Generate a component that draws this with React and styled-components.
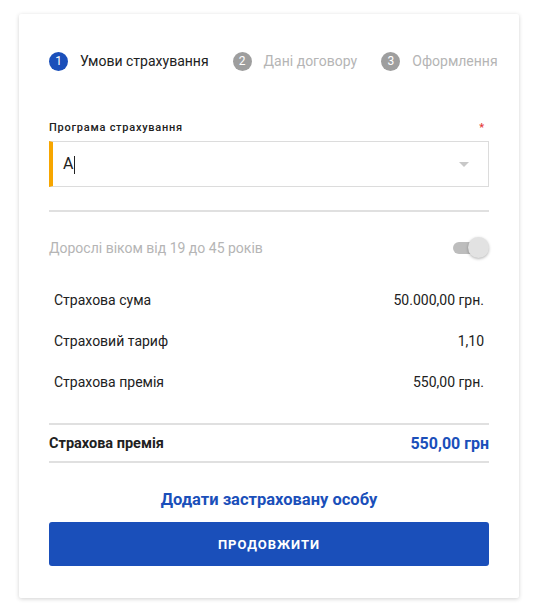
import styled, { createGlobalStyle } from "styled-components"

const Global = createGlobalStyle`
    body {
        margin: 0;
        background: #ffffff;
        font-family: Roboto, "Noto Sans", sans-serif;
    }
`

const Page = styled.div`
    padding: 14px 30px 13px 19px;
`

const Card = styled.section`
    width: 500px;
    box-sizing: border-box;
    padding: 37px 30px 32px;
    background: #fff;
    box-shadow: 0 1px 4px rgba(0, 0, 0, 0.18);
    border-radius: 2px;
`

const Steps = styled.div`
    display: flex;
    align-items: center;
    height: 20px;
    white-space: nowrap;
`

const Circle = styled.span`
    width: 19px;
    height: 19px;
    border-radius: 50%;
    background: ${p => p.$active ? "#1a4fba" : "#9e9e9e"};
    color: #fff;
    font-size: 12px;
    display: flex;
    align-items: center;
    justify-content: center;
    flex-shrink: 0;
`

const StepName = styled.span`
    margin-left: 12px;
    font-size: 14px;
    color: ${p => p.$active ? "#212121" : "#b5b5b5"};
`

const Dash = styled.span`
    margin: 0 12px;
    width: 7px;
    height: 1px;
    background: #9e9e9e;
`

const Field = styled.div`
    margin-top: 50px;
`

const LabelRow = styled.div`
    display: flex;
    justify-content: space-between;
    font-size: 11px;
    font-weight: 500;
    letter-spacing: 0.75px;
    color: #212121;
    height: 14px;
`

const Star = styled.span`
    color: #e53935;
    margin-right: 4px;
`

const Select = styled.div`
    margin-top: 6px;
    height: 46px;
    box-sizing: border-box;
    border: 1px solid #dcdcdc;
    border-left: 4px solid #f7a600;
    display: flex;
    align-items: center;
    justify-content: space-between;
    padding: 0 19px 0 10px;
    font-size: 16px;
    color: #212121;
`

const Caret = styled.span`
    width: 1px;
    height: 18px;
    background: #212121;
    display: inline-block;
    vertical-align: middle;
    margin-left: 1px;
`

const Arrow = styled.span`
    width: 0;
    height: 0;
    border-left: 5px solid transparent;
    border-right: 5px solid transparent;
    border-top: 5px solid #c8c8c8;
`

const Divider = styled.div`
    height: 2px;
    background: #e0e0e0;
    margin-top: ${p => p.$mt || 0}px;
`

const ToggleRow = styled.div`
    display: flex;
    justify-content: space-between;
    align-items: center;
    margin-top: 25px;
    height: 22px;
    font-size: 14px;
    color: #b5b5b5;
`

const Toggle = styled.div`
    position: relative;
    width: 36px;
    height: 22px;
`

const Track = styled.div`
    position: absolute;
    left: 0;
    top: 5px;
    width: 30px;
    height: 12px;
    border-radius: 6px;
    background: #bdbdbd;
`

const Knob = styled.div`
    position: absolute;
    right: 0;
    top: 0;
    width: 21px;
    height: 21px;
    border-radius: 50%;
    background: #e2e2e2;
    box-shadow: 0 1px 3px rgba(0, 0, 0, 0.3);
`

const List = styled.div`
    margin-top: 32px;
    padding: 0 5px;
    display: flex;
    flex-direction: column;
    gap: 23px;
`

const Row = styled.div`
    display: flex;
    justify-content: space-between;
    font-size: 14px;
    color: #212121;
    height: 18px;
    line-height: 18px;
`

const TotalRow = styled.div`
    display: flex;
    justify-content: space-between;
    align-items: center;
    height: 36px;
    font-size: 14.5px;
    font-weight: 700;
    color: #212121;
`

const TotalValue = styled.span`
    font-size: 16px;
    color: #1a4fba;
`

const AddLink = styled.div`
    margin-top: 27px;
    text-align: center;
    font-size: 16.5px;
    font-weight: 700;
    color: #1a4fba;
    height: 20px;
`

const Button = styled.button`
    margin-top: 12px;
    width: 100%;
    height: 44px;
    border: none;
    border-radius: 3px;
    background: #1a4fba;
    color: #fff;
    font-family: Roboto, sans-serif;
    font-size: 13px;
    font-weight: 700;
    letter-spacing: 1px;
`

const steps = [
    { n: 1, name: "Умови страхування", active: true },
    { n: 2, name: "Дані договору" },
    { n: 3, name: "Оформлення" },
]

const rows = [
    ["Страхова сума", "50.000,00 грн."],
    ["Страховий тариф", "1,10"],
    ["Страхова премія", "550,00 грн."],
]

const App = () => {
    return <>
        <Global />
        <Page>
            <Card>
                <Steps>
                    {steps.map((s, i) => <>
                        {i > 0 && <Dash />}
                        <Circle $active={s.active}>{s.n}</Circle>
                        <StepName $active={s.active}>{s.name}</StepName>
                    </>)}
                </Steps>
                <Field>
                    <LabelRow>
                        <span>Програма страхування</span>
                        <Star>*</Star>
                    </LabelRow>
                    <Select>
                        <span>А<Caret /></span>
                        <Arrow />
                    </Select>
                </Field>
                <Divider $mt={23} />
                <ToggleRow>
                    <span>Дорослі віком від 19 до 45 років</span>
                    <Toggle>
                        <Track />
                        <Knob />
                    </Toggle>
                </ToggleRow>
                <List>
                    {rows.map(([k, v]) => (
                        <Row key={k}>
                            <span>{k}</span>
                            <span>{v}</span>
                        </Row>
                    ))}
                </List>
                <Divider $mt={32} />
                <TotalRow>
                    <span>Страхова премія</span>
                    <TotalValue>550,00 грн</TotalValue>
                </TotalRow>
                <Divider />
                <AddLink>Додати застраховану особу</AddLink>
                <Button>ПРОДОВЖИТИ</Button>
            </Card>
        </Page>
    </>
}

export default App
